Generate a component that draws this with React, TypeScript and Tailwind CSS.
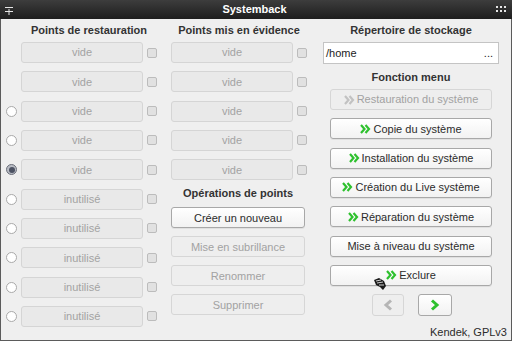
import React from 'react';

const font = "font-['Liberation_Sans',Arial,sans-serif]";

function Chevrons({ color = '#2ec12e' }: { color?: string }) {
  return (
    <svg width="11" height="10" viewBox="0 0 11 10" className="mr-[2px] shrink-0">
      <polyline points="1,1 4.5,5 1,9" fill="none" stroke={color} strokeWidth="2.2" />
      <polyline points="5.5,1 9,5 5.5,9" fill="none" stroke={color} strokeWidth="2.2" />
    </svg>
  );
}

function Field({ label }: { label: string }) {
  return (
    <div className="h-[21px] w-[122px] rounded-[3px] border border-[#d5d5d5] bg-[#e9e9e9] flex items-center justify-center text-[11px] text-[#a3a3a3]">
      {label}
    </div>
  );
}

function Check() {
  return <div className="h-[10px] w-[10px] rounded-[2px] border border-[#bcbcbc] bg-[#e1e1e1]" />;
}

function Radio({ state }: { state: 'none' | 'off' | 'on' }) {
  if (state === 'none') return <div className="w-[11px] h-[11px]" />;
  if (state === 'on')
    return (
      <div className="w-[11px] h-[11px] rounded-full border border-[#6b6f7a] bg-[#b9bcc4] flex items-center justify-center">
        <div className="w-[6px] h-[6px] rounded-full bg-[#4c5263]" />
      </div>
    );
  return <div className="w-[11px] h-[11px] rounded-full border border-[#a9a9a9] bg-white" />;
}

function Btn({ children, disabled, className = '' }: { children: React.ReactNode; disabled?: boolean; className?: string }) {
  return (
    <div
      className={
        'h-[21px] rounded-[3px] border flex items-center justify-center text-[11px] ' +
        (disabled
          ? 'border-[#d6d6d6] bg-[#eeeeee] text-[#a2a2a2] '
          : 'border-[#a8a8a8] bg-gradient-to-b from-white to-[#f2f2f2] text-[#2b2b2b] shadow-[0_1px_0_rgba(0,0,0,0.06)] ') +
        className
      }
    >
      {children}
    </div>
  );
}

const restore = ['vide', 'vide', 'vide', 'vide', 'vide', 'inutilisé', 'inutilisé', 'inutilisé', 'inutilisé', 'inutilisé'];
const radios: ('none' | 'off' | 'on')[] = ['none', 'none', 'off', 'off', 'on', 'off', 'off', 'off', 'off', 'off'];

export default function App() {
  return (
    <div className={`w-[512px] h-[341px] flex flex-col ${font}`}>
      {/* title bar */}
      <div className="h-[19px] shrink-0 bg-gradient-to-b from-[#3d3d3d] to-[#1e1e1e] flex items-center px-[5px] relative">
        <svg width="8" height="8" viewBox="0 0 8 8" className="mt-[2px]">
          <line x1="0" y1="0.5" x2="8" y2="0.5" stroke="#e6e6e6" strokeWidth="1" />
          <line x1="0" y1="4.5" x2="8" y2="4.5" stroke="#e6e6e6" strokeWidth="1" />
          <line x1="4" y1="2" x2="4" y2="8" stroke="#e6e6e6" strokeWidth="1" />
        </svg>
        <div className="flex-1 text-center text-white font-bold text-[11px] leading-[19px]">Systemback</div>
        <svg width="10" height="7" viewBox="0 0 10 7" className="mr-[1px]">
          {[0, 4, 8].map((x) => (
            <React.Fragment key={x}>
              <rect x={x} y="0" width="2" height="2" fill="#e6e6e6" />
              <rect x={x} y="4" width="2" height="2" fill="#e6e6e6" />
            </React.Fragment>
          ))}
        </svg>
      </div>

      {/* body */}
      <div className="flex-1 flex bg-[#efefef] border-l border-r border-b border-[#5b5b5b] relative text-[#2b2b2b]">
        {/* column 1 */}
        <div className="w-[157px] pl-[5px] pt-[3px] flex flex-col">
          <div className="ml-[15px] w-[136px] h-[16px] leading-[16px] text-center font-bold text-[11px] text-[#333]">Points de restauration</div>
          <div className="mt-[4px] flex flex-col gap-[8.33px]">
            {restore.map((label, i) => (
              <div key={i} className="flex items-center gap-[4px]">
                <Radio state={radios[i]} />
                <Field label={label} />
                <Check />
              </div>
            ))}
          </div>
        </div>

        {/* column 2 */}
        <div className="w-[149px] pl-[13px] pt-[3px] flex flex-col">
          <div className="w-[136px] h-[16px] leading-[16px] text-center font-bold text-[11px] text-[#333]">Points mis en évidence</div>
          <div className="mt-[4px] flex flex-col gap-[8.33px]">
            {[0, 1, 2, 3, 4].map((i) => (
              <div key={i} className="flex items-center gap-[4px]">
                <Field label="vide" />
                <Check />
              </div>
            ))}
          </div>
          <div className="mt-[5px] w-[134px] h-[16px] leading-[16px] text-center font-bold text-[11px] text-[#333]">Opérations de points</div>
          <div className="mt-[6px] w-[134px] flex flex-col gap-[8px]">
            <Btn>Créer un nouveau</Btn>
            <Btn disabled>Mise en subrillance</Btn>
            <Btn disabled>Renommer</Btn>
            <Btn disabled>Supprimer</Btn>
          </div>
        </div>

        {/* column 3 */}
        <div className="flex-1 pl-[16px] pt-[3px] flex flex-col">
          <div className="w-[176px] flex flex-col">
            <div className="h-[16px] leading-[16px] text-center font-bold text-[11px] text-[#333]">Répertoire de stockage</div>
            <div className="mt-[4px] h-[22px] border border-[#c4c4c4] bg-white flex items-center justify-between px-[2px] text-[11px] text-[#222]">
              <span>/home</span>
              <span className="pr-[3px]">...</span>
            </div>
            <div className="mt-[5px] h-[16px] leading-[16px] text-center font-bold text-[11px] text-[#333]">Fonction menu</div>
            <div className="mt-[4px] mx-[7px] flex flex-col gap-[8.33px]">
              <Btn disabled><Chevrons color="#c2c2c2" />Restauration du système</Btn>
              <Btn><Chevrons />Copie du système</Btn>
              <Btn><Chevrons />Installation du système</Btn>
              <Btn><Chevrons />Création du Live système</Btn>
              <Btn><Chevrons />Réparation du système</Btn>
              <Btn>Mise à niveau du système</Btn>
              <Btn><Chevrons />Exclure</Btn>
            </div>
            <div className="mt-[8px] flex justify-center gap-[14px] pl-[1px]">
              <div className="w-[32px] h-[22px] rounded-[3px] border border-[#d6d6d6] bg-[#eeeeee] flex items-center justify-center">
                <svg width="10" height="12" viewBox="0 0 10 12">
                  <polyline points="8,1.5 3,6 8,10.5" fill="none" stroke="#b5b5b5" strokeWidth="3" />
                </svg>
              </div>
              <div className="w-[34px] h-[22px] rounded-[3px] border border-[#a8a8a8] bg-gradient-to-b from-white to-[#f2f2f2] flex items-center justify-center">
                <svg width="10" height="12" viewBox="0 0 10 12">
                  <polyline points="2,1.5 7,6 2,10.5" fill="none" stroke="#2ec12e" strokeWidth="3" />
                </svg>
              </div>
            </div>
          </div>
          <div className="mt-auto pr-[4px] pb-[1px] text-right text-[11px] text-[#2b2b2b] leading-[14px]">Kendek, GPLv3</div>
        </div>

        {/* mouse cursor */}
        <svg width="14" height="14" viewBox="0 0 14 14" className="absolute left-[372px] top-[258px]">
          <path d="M1 3 L6 1 L11 4 L13 9 L10 13 L7 10 L3 8 Z" fill="#1a1a1a" />
          <path d="M3 4 L8 3 M4 6 L10 5 M6 8 L11 8" stroke="#cfcfcf" strokeWidth="1" />
        </svg>
      </div>
    </div>
  );
}
